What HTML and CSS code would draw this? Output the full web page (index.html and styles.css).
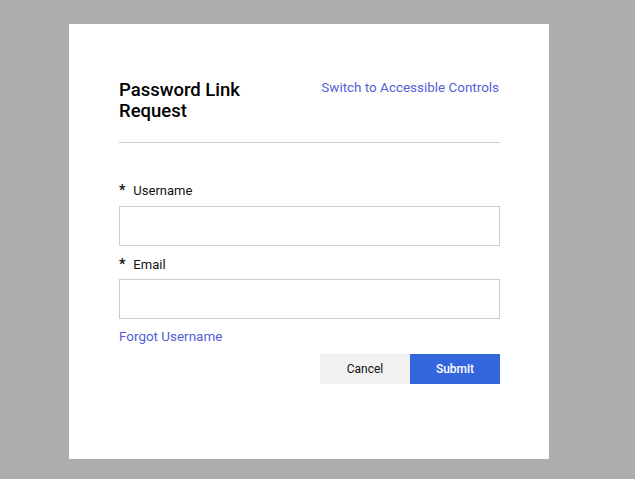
FILE: index.html
```html
<!DOCTYPE html>
<html>
<head>
<meta charset="utf-8">
<link rel="stylesheet" href="styles.css">
</head>
<body>
<div class="page">
  <div class="panel">
    <div class="header">
      <h1 class="title">Password Link<br>Request</h1>
      <a class="link switch" href="#">Switch to Accessible Controls</a>
    </div>
    <div class="divider"></div>
    <form class="form">
      <label class="label label-first"><span class="req">*</span>Username</label>
      <input class="input" type="text">
      <label class="label label-email"><span class="req">*</span>Email</label>
      <input class="input" type="text">
      <a class="link forgot" href="#">Forgot Username</a>
      <div class="actions">
        <button type="button" class="btn btn-cancel">Cancel</button>
        <button type="button" class="btn btn-submit">Submit</button>
      </div>
    </form>
  </div>
</div>
</body>
</html>
```

FILE: styles.css
```css
html, body {
  margin: 0;
  padding: 0;
  background: #adadad;
  font-family: Roboto, "Liberation Sans", sans-serif;
}
.page {
  width: 635px;
  height: 479px;
  padding-top: 24px;
  padding-left: 69px;
  box-sizing: border-box;
}
.panel {
  width: 480px;
  height: 435px;
  background: #fff;
  box-sizing: border-box;
  padding: 56px 49px 0 50px;
}
.header {
  display: flex;
  justify-content: space-between;
  align-items: flex-start;
}
.title {
  margin: 0;
  font-size: 18.5px;
  line-height: 21px;
  font-weight: 500;
  color: #000;
}
.link {
  color: #5461d6;
  text-decoration: none;
  font-size: 13.45px;
  line-height: 16px;
}
.switch {
  margin-top: 0;
  margin-right: 1px;
}
.divider {
  height: 1px;
  background: #cccccc;
  margin-top: 20px;
}
.form {
  display: flex;
  flex-direction: column;
}
.label {
  font-size: 13px;
  line-height: 16px;
  color: #111;
  margin-top: 10px;
  margin-bottom: 7px;
}
.label-first {
  margin-top: 39px;
}
.label-email {
  margin-bottom: 6px;
}
.req {
  font-weight: 700;
  margin-right: 8px;
  font-size: 14px;
}
.input {
  height: 40px;
  box-sizing: border-box;
  border: 1px solid #cccccc;
  margin: 0;
  padding: 0 8px;
  font: inherit;
  width: 381px;
}
.forgot {
  margin-top: 10px;
  align-self: flex-start;
}
.actions {
  display: flex;
  justify-content: flex-end;
  margin-top: 9px;
  margin-right: 0;
}
.btn {
  width: 90px;
  height: 30px;
  border: none;
  margin: 0;
  font-family: Roboto, "Liberation Sans", sans-serif;
  font-size: 12px;
  cursor: pointer;
}
.btn-cancel {
  background: #f2f2f2;
  color: #111;
}
.btn-submit {
  background: #3366dd;
  color: #fff;
  font-weight: 500;
}
```
